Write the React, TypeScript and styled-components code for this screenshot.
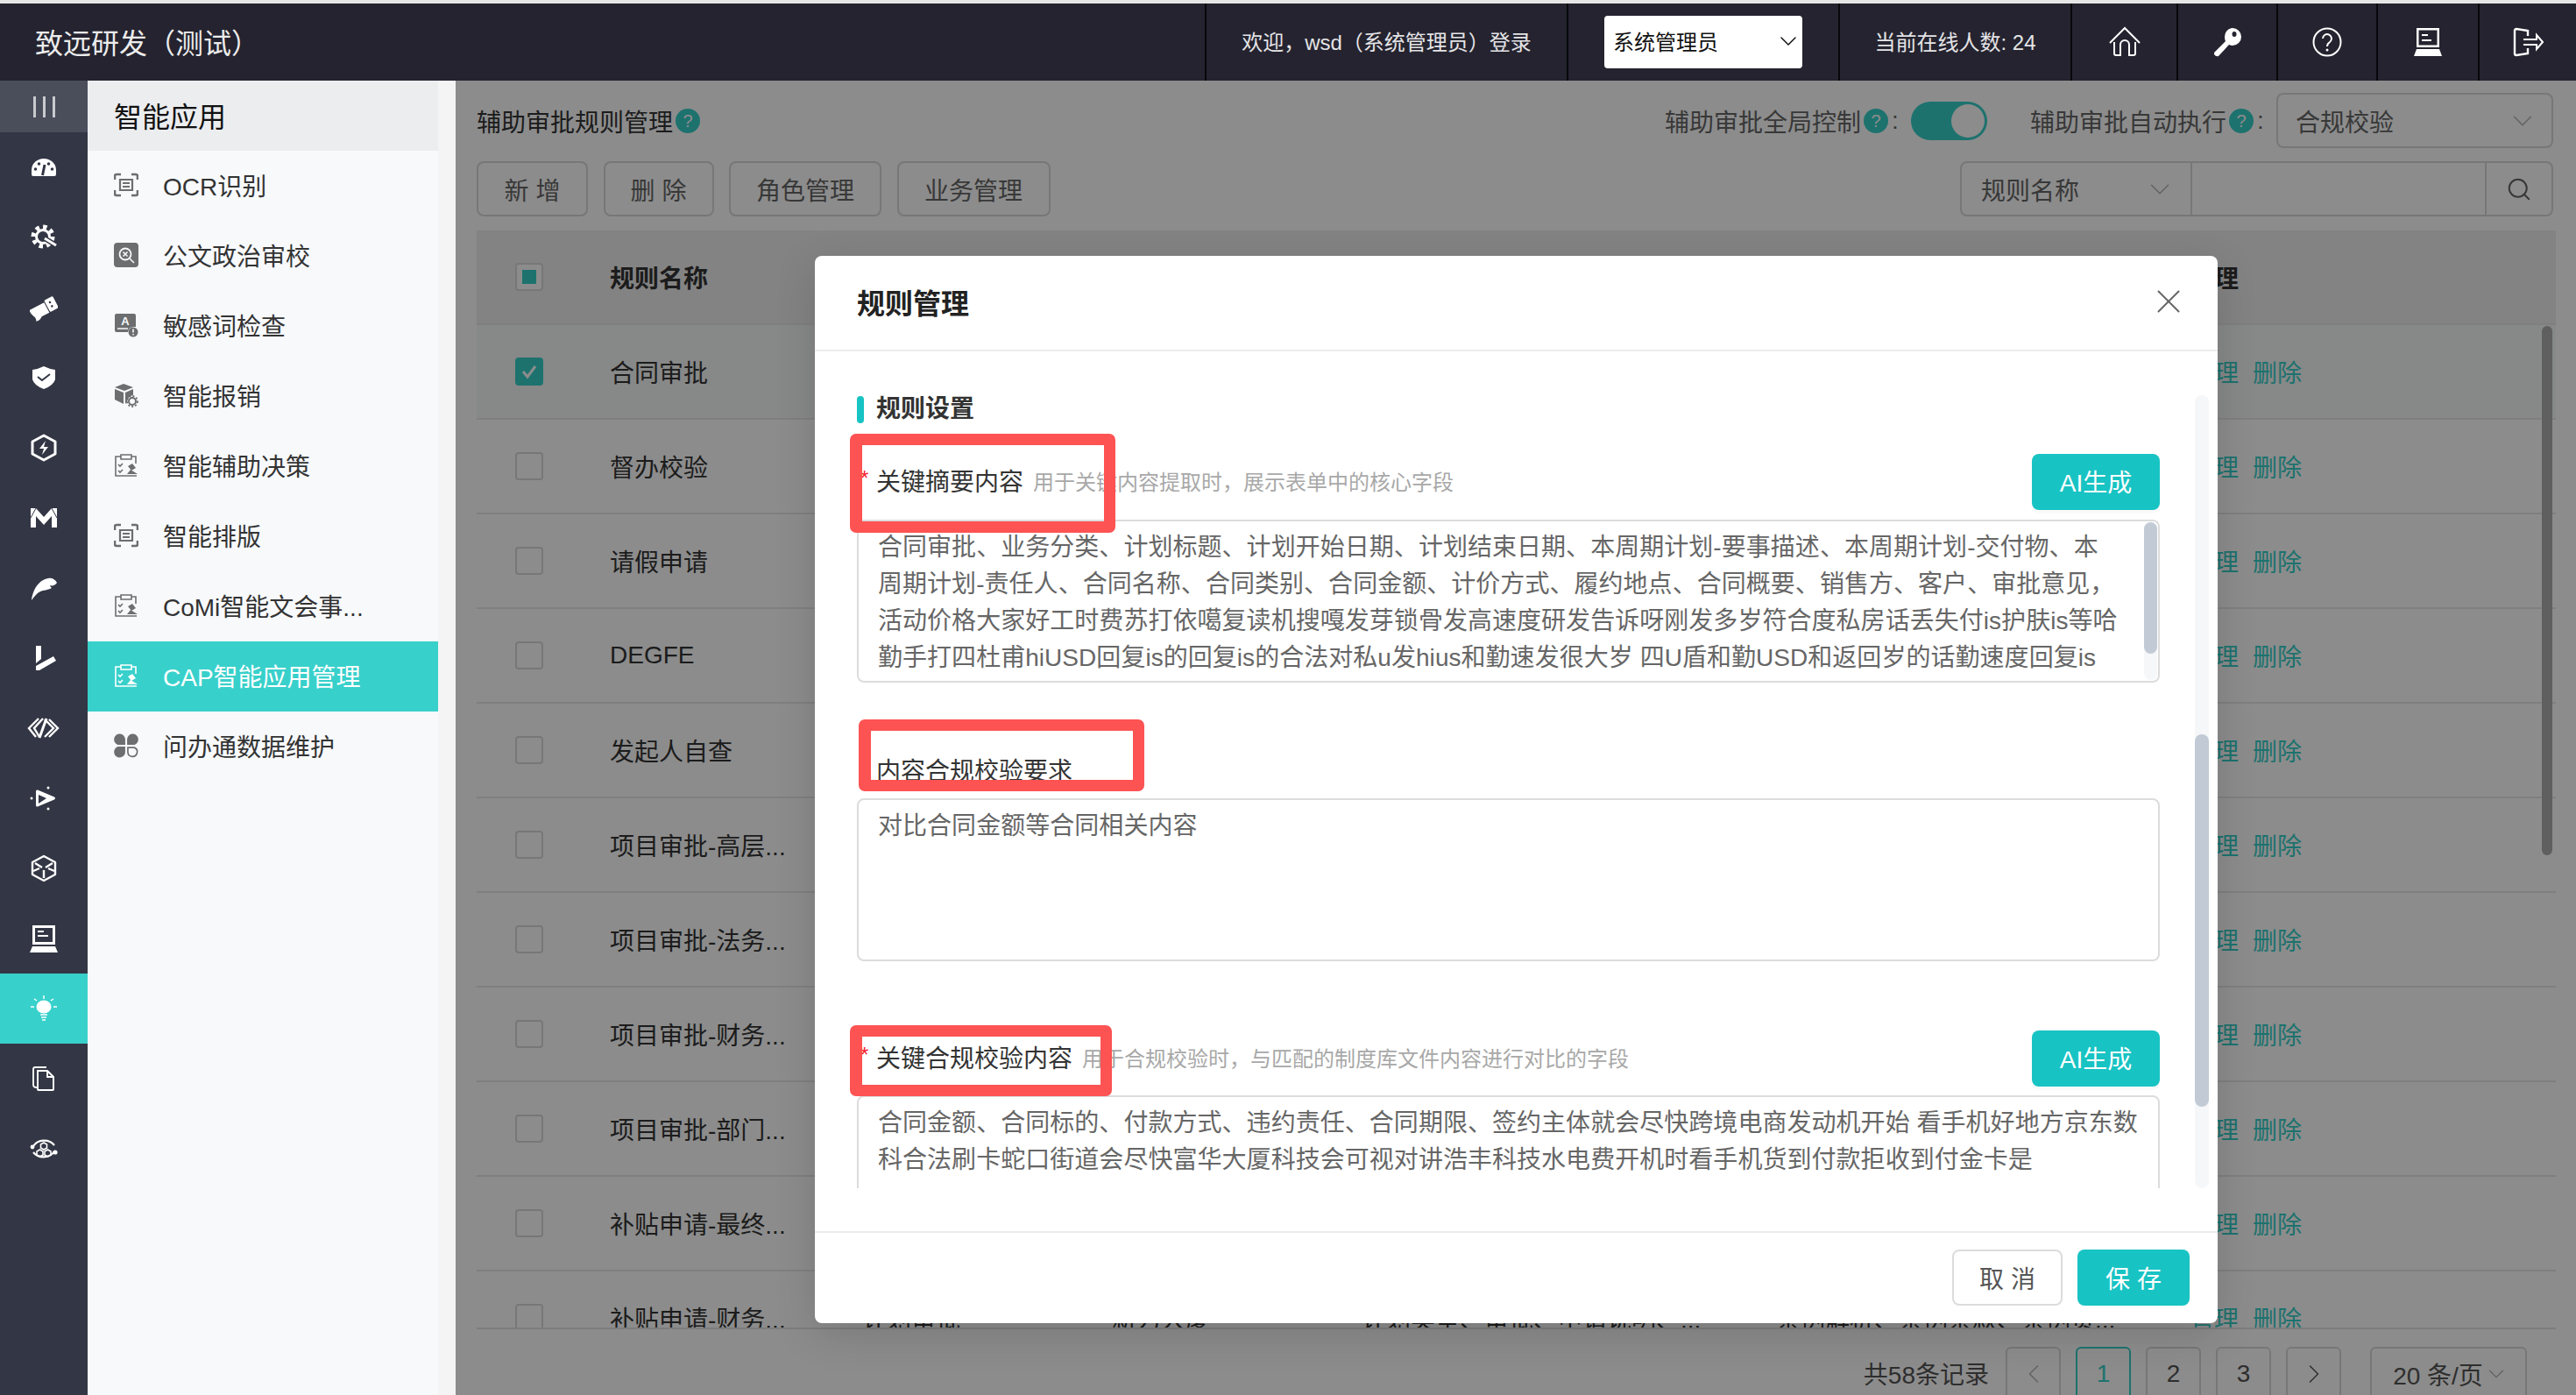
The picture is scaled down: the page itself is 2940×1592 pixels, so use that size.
import React from "react";
import styled, { createGlobalStyle } from "styled-components";
import { ChevronDown, ChevronLeft, ChevronRight, Search, X } from "lucide-react";

const RAIL_BG = "#333644";
const ACTIVE = "#38d0cb";
const PRIMARY = "#18c3c3";
const MAIN_TEAL = "#36cfc9";

const GlobalStyle = createGlobalStyle`
    html, body {
        margin: 0;
        padding: 0;
        width: 2940px;
        height: 1592px;
        overflow: hidden;
        background: #ffffff;
        font-family: "Liberation Sans", "Noto Sans CJK SC", sans-serif;
    }
    * {
        box-sizing: border-box;
    }
`

const Page = styled.div`
    width: 2940px;
    height: 1592px;
    display: flex;
    flex-direction: column;
    border-top: 4px solid #e6e6e6;
`

/* top bar */
const TopBar = styled.header`
    height: 88px;
    flex: none;
    display: flex;
    align-items: stretch;
    background: #24232f;
    color: #e4e4e6;
`
const Brand = styled.div`
    flex: 1;
    padding: 0 0 3px 40px;
    display: flex;
    align-items: center;
    font-size: 32px;
    color: #ececec;
`
const TopCell = styled.div<{ $w: number; $text?: boolean }>`
    width: ${(p) => p.$w}px;
    flex: none;
    display: flex;
    align-items: center;
    justify-content: center;
    border-left: 2px solid #08080c;
    padding-bottom: ${(p) => (p.$text ? "3px" : "0")};
    font-size: 24px;
    white-space: nowrap;
`
const RoleSelect = styled.div`
    width: 226px;
    height: 60px;
    background: #ffffff;
    border-radius: 4px;
    color: #111;
    display: flex;
    align-items: center;
    justify-content: space-between;
    padding: 0 0 3px 10px;
`

/* layout */
const Body = styled.div`
    flex: 1;
    display: flex;
    min-height: 0;
`
const Rail = styled.nav`
    width: 100px;
    flex: none;
    background: ${RAIL_BG};
    display: flex;
    flex-direction: column;
`
const RailToggle = styled.div`
    height: 59px;
    flex: none;
    background: #4a4e5b;
    display: flex;
    align-items: center;
    justify-content: center;
    gap: 8px;
    i {
        display: block;
        width: 3px;
        height: 24px;
        background: #c9cace;
    }
`
const RailItem = styled.div<{ $active?: boolean }>`
    height: 80px;
    flex: none;
    display: flex;
    align-items: center;
    justify-content: center;
    color: #ffffff;
    background: ${(p) => (p.$active ? ACTIVE : "transparent")};
`
const Menu = styled.aside`
    width: 420px;
    flex: none;
    background: #f7f9fb;
    border-right: 20px solid #f4f4f4;
`
const MenuHead = styled.div`
    height: 80px;
    background: #ecedef;
    padding: 0 0 3px 30px;
    display: flex;
    align-items: center;
    font-size: 32px;
    color: #111;
`
const MenuItem = styled.div<{ $active?: boolean }>`
    height: 80px;
    padding: 0 0 3px 30px;
    display: grid;
    grid-template-columns: 28px auto;
    justify-content: start;
    align-items: center;
    column-gap: 28px;
    font-size: 28px;
    white-space: nowrap;
    color: ${(p) => (p.$active ? "#ffffff" : "#333333")};
    background: ${(p) => (p.$active ? ACTIVE : "transparent")};
    svg {
        justify-self: center;
        color: ${(p) => (p.$active ? "#ffffff" : "#6c6e70")};
    }
`

/* main page, dimmed by the modal mask */
const Main = styled.main`
    flex: 1;
    min-width: 0;
    position: relative;
    overflow: hidden;
    background: #ffffff;
    padding: 14px 23px 0 24px;
`
const Mask = styled.div`
    position: absolute;
    inset: 0;
    background: rgba(0, 0, 0, 0.45);
`
const TitleRow = styled.div`
    height: 63px;
    display: flex;
    align-items: center;
    padding-right: 3px;
    font-size: 28px;
    color: #666666;
    white-space: nowrap;
`
const PageTitle = styled.div`
    display: flex;
    align-items: center;
    color: #333333;
    margin-right: auto;
`
const Badge = styled.span`
    width: 28px;
    height: 28px;
    margin-left: 3px;
    flex: none;
    border-radius: 50%;
    background: ${MAIN_TEAL};
    color: #ffffff;
    font-size: 20px;
    line-height: 28px;
    text-align: center;
`
const Colon = styled.span`
    width: 26px;
    padding-left: 4px;
`
const Toggle = styled.div`
    width: 87px;
    height: 44px;
    border-radius: 22px;
    background: ${MAIN_TEAL};
    display: flex;
    align-items: center;
    justify-content: flex-end;
    padding-right: 3px;
    margin-right: 49px;
    &::after {
        content: "";
        width: 38px;
        height: 38px;
        border-radius: 50%;
        background: #ffffff;
    }
`
const AutoSelect = styled.div`
    width: 316px;
    height: 63px;
    border: 2px solid #d9d9d9;
    border-radius: 8px;
    display: flex;
    align-items: center;
    justify-content: space-between;
    padding: 0 14px 0 20px;
    color: #666666;
    svg {
        color: #b5b5b5;
    }
`
const Toolbar = styled.div`
    height: 63px;
    margin-top: 15px;
    display: flex;
    padding-right: 3px;
    gap: 17.5px;
`
const ToolButton = styled.button<{ $w: number }>`
    width: ${(p) => p.$w}px;
    height: 63px;
    padding: 0;
    border: 2px solid #d9d9d9;
    border-radius: 8px;
    background: #ffffff;
    color: #666666;
    font: inherit;
    font-size: 28px;
    white-space: pre;
`
const SearchBox = styled.div`
    margin-left: auto;
    width: 677px;
    height: 63px;
    border: 2px solid #d9d9d9;
    border-radius: 8px;
    display: flex;
    font-size: 28px;
    color: #666666;
    svg {
        color: #b5b5b5;
    }
`
const SearchField = styled.div`
    width: 263px;
    display: flex;
    align-items: center;
    justify-content: space-between;
    padding: 0 16px 0 22px;
    border-right: 2px solid #d9d9d9;
`
const SearchInput = styled.div`
    flex: 1;
`
const SearchAction = styled.div`
    width: 76px;
    display: flex;
    align-items: center;
    justify-content: center;
    border-left: 2px solid #d9d9d9;
    svg {
        color: #666666;
    }
`

/* table */
const TableWrap = styled.div`
    position: relative;
    height: 1254px;
    margin-top: 16px;
    overflow: hidden;
    border-bottom: 2px solid #e4e4e4;
    font-size: 28px;
    color: #333333;
`
const TableRow = styled.div<{ $head?: boolean; $selected?: boolean }>`
    display: grid;
    grid-template-columns: 152px 288px 285px 285px 473px 472px 1fr;
    height: 108px;
    align-items: center;
    border-bottom: 2px solid #e8e8e8;
    white-space: nowrap;
    font-weight: ${(p) => (p.$head ? 700 : 400)};
    background: ${(p) => (p.$head ? "#eeeeee" : p.$selected ? "#f6f7f8" : "#ffffff")};
`
const CheckCell = styled.div`
    padding-left: 44px;
`
const CheckBox = styled.div<{ $state?: "checked" | "mixed" }>`
    width: 32px;
    height: 32px;
    border-radius: 4px;
    border: 2px solid ${(p) => (p.$state === "checked" ? MAIN_TEAL : "#d9d9d9")};
    background: ${(p) => (p.$state === "checked" ? MAIN_TEAL : "#ffffff")};
    display: flex;
    align-items: center;
    justify-content: center;
    &::after {
        content: "";
        display: ${(p) => (p.$state === "mixed" ? "block" : "none")};
        width: 16px;
        height: 16px;
        background: ${MAIN_TEAL};
    }
`
const ActionCell = styled.div`
    grid-column: 7;
    display: flex;
    gap: 16px;
    color: ${MAIN_TEAL};
`
const HeadAction = styled.div`
    grid-column: 7;
`
const PageScroll = styled.div`
    position: absolute;
    left: 2357px;
    top: 109px;
    width: 12px;
    height: 604px;
    border-radius: 6px;
    background: #adadad;
`

/* pagination */
const Pager = styled.div`
    height: 64px;
    margin-top: 20px;
    padding-right: 33px;
    display: flex;
    align-items: center;
    justify-content: flex-end;
    gap: 17px;
    font-size: 28px;
    color: #555555;
`
const PagerTotal = styled.span`
    margin: 0 2px 4px 0;
`
const PagerBox = styled.div<{ $active?: boolean; $wide?: boolean }>`
    width: ${(p) => (p.$wide ? "179px" : "63px")};
    height: 64px;
    padding: ${(p) => (p.$wide ? "0 0 3px 6px" : "0 0 3px")};
    border-radius: 6px;
    border: 2px solid ${(p) => (p.$active ? MAIN_TEAL : "#d9d9d9")};
    color: ${(p) => (p.$active ? MAIN_TEAL : "#555555")};
    background: #ffffff;
    display: flex;
    align-items: center;
    justify-content: center;
    white-space: nowrap;
    margin-left: ${(p) => (p.$wide ? "16px" : "0")};
    svg {
        flex: none;
    }
`

/* modal */
const Modal = styled.section`
    position: absolute;
    left: 410px;
    top: 200px;
    width: 1601px;
    height: 1218px;
    background: #ffffff;
    border-radius: 8px;
    box-shadow: 0 12px 48px rgba(0, 0, 0, 0.14);
    display: flex;
    flex-direction: column;
`
const ModalHeader = styled.div`
    height: 109px;
    flex: none;
    border-bottom: 2px solid #ececec;
    display: flex;
    align-items: center;
    justify-content: space-between;
    padding: 0 33px 3px 48px;
    font-size: 32px;
    font-weight: 700;
    color: #222222;
    svg {
        color: #666666;
    }
`
const ModalBody = styled.div`
    height: 955px;
    flex: none;
    overflow: hidden;
    padding: 51px 66px 0 48px;
    margin-bottom: 49px;
`
const SectionTitle = styled.div`
    height: 31px;
    display: flex;
    align-items: flex-start;
    gap: 14px;
    font-size: 28px;
    line-height: 30px;
    font-weight: 700;
    color: #333333;
    &::before {
        content: "";
        width: 8px;
        height: 31px;
        border-radius: 4px;
        background: ${PRIMARY};
    }
`
const FieldRow = styled.div<{ $plain?: boolean; $gap: number }>`
    position: relative;
    height: ${(p) => (p.$plain ? "40px" : "64px")};
    margin-top: ${(p) => p.$gap}px;
    padding-left: 22px;
    display: flex;
    align-items: center;
    white-space: nowrap;
`
const FieldLabel = styled.span`
    margin-bottom: 4px;
    font-size: 28px;
    color: #333333;
`
const Star = styled.span`
    position: absolute;
    left: 4px;
    top: 14px;
    font-size: 24px;
    color: #f5222d;
`
const FieldHint = styled.span`
    margin: 0 auto 4px 11px;
    font-size: 24px;
    color: #a8a8a8;
`
const GenerateButton = styled.button`
    width: 146px;
    height: 64px;
    padding: 0 0 3px;
    border: none;
    border-radius: 8px;
    background: ${PRIMARY};
    color: #ffffff;
    font: inherit;
    font-size: 28px;
    box-shadow: 0 4px 0 rgba(0, 0, 0, 0.02);
`
const TextBox = styled.div<{ $gap: number }>`
    position: relative;
    height: 186px;
    margin-top: ${(p) => p.$gap}px;
    border: 2px solid #dcdcdc;
    border-radius: 8px;
    overflow: hidden;
    padding: 9px 22px 0;
    font-size: 28px;
    line-height: 42px;
    letter-spacing: 0.04px;
    color: #666666;
    white-space: nowrap;
`
const BoxScrollTrack = styled.div`
    position: absolute;
    right: 1px;
    top: 1px;
    bottom: 1px;
    width: 15px;
    border-radius: 8px;
    background: #f6f7f9;
    &::after {
        content: "";
        display: block;
        height: 150px;
        border-radius: 8px;
        background: #c2cad5;
    }
`
const Annotation = styled.div<{ $left: number; $top: number; $w: number; $h: number }>`
    position: absolute;
    left: ${(p) => p.$left}px;
    top: ${(p) => p.$top}px;
    width: ${(p) => p.$w}px;
    height: ${(p) => p.$h}px;
    border: 13px solid #fd5353;
    border-left-width: 14px;
    border-radius: 7px;
    z-index: 2;
`
const BodyScroll = styled.div`
    position: absolute;
    left: 1575px;
    top: 159px;
    width: 16px;
    height: 905px;
    border-radius: 8px;
    background: #f6f7f9;
    &::after {
        content: "";
        display: block;
        height: 425px;
        border-radius: 8px;
        background: #c2cad5;
        transform: translateY(387px);
    }
`
const ModalFooter = styled.div`
    flex: 1;
    border-top: 2px solid #ececec;
    padding: 19px 32px 0 0;
    display: flex;
    justify-content: flex-end;
    gap: 17px;
`
const FooterButton = styled.button<{ $primary?: boolean }>`
    width: ${(p) => (p.$primary ? "128px" : "126px")};
    height: 64px;
    border-radius: 8px;
    border: ${(p) => (p.$primary ? "none" : "2px solid #dcdcdc")};
    background: ${(p) => (p.$primary ? PRIMARY : "#ffffff")};
    color: ${(p) => (p.$primary ? "#ffffff" : "#555555")};
    font: inherit;
    font-size: 28px;
    white-space: pre;
`

/* rail and top-bar drawings */
const Ico: React.FC<{ w?: number; h?: number; vb?: string; children: React.ReactNode }> = ({ w = 32, h = 32, vb = "0 0 32 32", children }) => (
    <svg width={w} height={h} viewBox={vb} fill="none">
        {children}
    </svg>
)

const railIcons: React.ReactNode[] = [
    <Ico key="gauge">
        <path d="M2 24V19a14 13 0 0 1 28 0v5q0 2-2 2H4q-2 0-2-2z" fill="#fff" />
        <circle cx="6.5" cy="18" r="1.8" fill={RAIL_BG} />
        <circle cx="10.5" cy="12" r="1.8" fill={RAIL_BG} />
        <circle cx="21.5" cy="12" r="1.8" fill={RAIL_BG} />
        <circle cx="25.5" cy="18" r="1.8" fill={RAIL_BG} />
        <path d="M14.5 25l2.500-12" stroke={RAIL_BG} strokeWidth="3" />
    </Ico>,
    <Ico key="gear">
        <circle cx="15" cy="15" r="11" stroke="#fff" strokeWidth="5" strokeDasharray="4.4 4.2" />
        <circle cx="15" cy="15" r="7.5" stroke="#fff" strokeWidth="3" />
        <path d="M17 17l13 8" stroke={RAIL_BG} strokeWidth="6" />
        <path d="M17 17l13 8" stroke="#fff" strokeWidth="3" />
    </Ico>,
    <Ico key="usb">
        <g transform="rotate(-28 16 16)">
            <path d="M0 11h19v13H9q-3 3-8 2 2-4 0-7-2-4-1-8z" fill="#fff" />
            <rect x="20" y="9" width="11" height="15" rx="1.500" fill="#fff" />
            <circle cx="25" cy="14" r="1.300" fill={RAIL_BG} />
            <circle cx="25" cy="19" r="1.300" fill={RAIL_BG} />
        </g>
    </Ico>,
    <Ico key="shield">
        <path d="M3 7q7-1 13-4 6 3 13 4v11q-2 7-13 11Q5 25 3 18z" fill="#fff" />
        <path d="M9 15l5 4 9-7" stroke={RAIL_BG} strokeWidth="2" />
    </Ico>,
    <Ico key="bolt">
        <path d="M16 2l13 7v14l-13 7-13-7V9z" stroke="#fff" strokeWidth="3" strokeLinejoin="round" />
        <path d="M18 8l-7 9h5l-2 7 7-9h-5z" fill="#fff" />
    </Ico>,
    <Ico key="m">
        <path d="M1 5h6l9 10 9-10h6v22h-6V14l-9 10-9-10v13H1z" fill="#fff" />
        <path d="M7 5l-6 11M25 5l6 11" stroke={RAIL_BG} strokeWidth="1" />
    </Ico>,
    <Ico key="feather">
        <path d="M2 30C3 20 9 7 21 5c4-1 8 1 10 5-2 3-5 4-8 3 1 2 1 2 2 3-5 3-9 2-13 4-4 2-7 6-10 10z" fill="#fff" />
    </Ico>,
    <Ico key="sign">
        <path d="M7 2h6v15l-6 5zM7 25L27 14l3 5L11 30H7z" fill="#fff" />
    </Ico>,
    <Ico key="code" w={40} vb="0 0 40 32">
        <path d="M14 5L3 16l8 10M19 5L9 16l6 10" stroke="#fff" strokeWidth="2.400" />
        <path d="M26 6l10 10-10 10M21 6l10 10-10 10" stroke="#fff" strokeWidth="2.400" />
        <path d="M23 5L15 27" stroke="#fff" strokeWidth="3" />
    </Ico>,
    <Ico key="play">
        <path d="M7 8q0-2 2-1.500l19 8q2 1.500 0 3l-19 8q-2 .5-2-1.500z" fill="#fff" />
        <path d="M10 12l9 4-9 6z" fill={RAIL_BG} />
        <circle cx="2" cy="16" r="1.500" fill="#fff" />
        <circle cx="21" cy="4" r="1.500" fill="#fff" />
        <circle cx="21" cy="28" r="1.500" fill="#fff" />
    </Ico>,
    <Ico key="cube">
        <path d="M16 2l13 7v14l-13 7-13-7V9z" stroke="#fff" strokeWidth="2.400" strokeLinejoin="round" />
        <path d="M16 18v9M14 15L6 10M18 15l8-5M4 19l7-3M28 19l-7-3" stroke="#fff" strokeWidth="2.400" />
    </Ico>,
    <Ico key="laptop" w={36} h={34} vb="0 0 36 34">
        <path d="M5 2h26v22H5zM8 5v16h20V5z" fill="#fff" fillRule="evenodd" />
        <path d="M11 8h7v2h-7zM11 13h12v2H11z" fill="#fff" />
        <path d="M5 26h26l3 7H2z" fill="#fff" />
    </Ico>,
    <Ico key="bulb">
        <ellipse cx="16" cy="14" rx="8.500" ry="7.500" fill="#fff" />
        <path d="M12 23h8M13 26h6M14 29h4M16 1v4M5 5l3 2M27 5l-3 2M1 14h4M27 14h4" stroke="#fff" strokeWidth="1.500" />
    </Ico>,
    <Ico key="files">
        <path d="M8 26q-4 0-4-3V5q0-2 2-2h13" stroke="#fff" strokeWidth="1.800" />
        <path d="M9 7h11l7 7v14q0 1-1 1H10q-1 0-1-1z" stroke="#fff" strokeWidth="2" />
        <path d="M20 7v7h7" stroke="#fff" strokeWidth="1.800" />
    </Ico>,
    <Ico key="cycle">
        <path d="M4 13A14 12 0 0 1 28 12M28 19A14 12 0 0 1 4 20" stroke="#fff" strokeWidth="2.200" />
        <circle cx="3" cy="14" r="2.400" fill="#fff" />
        <circle cx="29" cy="20" r="2.600" fill="#fff" />
        <path d="M16 9l3.500 2v4L16 17l-3.500-2v-4zM11.500 17l3.500 2v4l-3.500 2L8 23v-4zM20.500 17l3.500 2v4l-3.500 2-3.500-2v-4z" stroke="#fff" strokeWidth="1.600" />
    </Ico>,
];

const HomeIcon = () => (
    <Ico w={36} h={36} vb="0 0 36 36">
        <path d="M1 19L18 2l17 17" stroke="#fff" strokeWidth="2" />
        <path d="M6 18v13q0 2 2 2h5V21a5 5 0 0 1 10 0v12h5q2 0 2-2V18" stroke="#fff" strokeWidth="2" />
    </Ico>
);
const KeyIcon = () => (
    <Ico w={36} h={36} vb="0 0 36 36">
        <path d="M24 2a10 10 0 0 1 0 20q-2 0-4-1L8 34q-3 1-5-2v-2l13-13q-1-2-1-5a10 10 0 0 1 8-10z" fill="#fff" />
        <ellipse cx="26" cy="9" rx="2.500" ry="3" fill="#24232f" />
    </Ico>
);
const HelpIcon = () => (
    <Ico w={36} h={36} vb="0 0 36 36">
        <circle cx="18" cy="18" r="15.500" stroke="#fff" strokeWidth="2" />
        <path d="M13 14a5 5 0 1 1 8 4q-3 2-3 5" stroke="#fff" strokeWidth="2" />
        <circle cx="18" cy="27" r="1.500" fill="#fff" />
    </Ico>
);
const LaptopIcon = () => (
    <Ico w={36} h={36} vb="0 0 36 36">
        <path d="M5 2h26v22H5zM7.500 4.500v17h21v-17z" fill="#fff" fillRule="evenodd" />
        <path d="M11 9h7v2h-7zM11 15h11v2H11z" fill="#fff" />
        <path d="M5 26h26l3 8H2z" fill="#fff" />
    </Ico>
);
const ExitIcon = () => (
    <Ico w={36} h={36} vb="0 0 36 36">
        <path d="M18 11V5L5 3q-2 0-2 2v26q0 2 2 2l13-2v-6" stroke="#fff" strokeWidth="2.400" />
        <path d="M13 15h15v-5l7 8-7 8v-5H13" stroke="#fff" strokeWidth="2" />
    </Ico>
);

/* menu drawings */
const ScanIcon = () => (
    <Ico w={28} h={28} vb="0 0 28 28">
        <path d="M8 2H3Q1 2 1 4v4M20 2h5q2 0 2 2v4M8 26H3q-2 0-2-2v-4M20 26h5q2 0 2-2v-4" stroke="currentColor" strokeWidth="2.600" />
        <path d="M7 8h14v12H7z" stroke="currentColor" strokeWidth="2.200" />
        <path d="M10 12h8M10 16h8" stroke="currentColor" strokeWidth="2" />
    </Ico>
);
const LensIcon = () => (
    <Ico w={28} h={28} vb="0 0 28 28">
        <rect y="0" width="28" height="28" rx="4" fill="currentColor" />
        <circle cx="13" cy="13" r="6.500" stroke="#f7f9fb" strokeWidth="1.800" />
        <path d="M18 18l5 5M10.500 10.500l5 5M15.500 10.500l-5 5" stroke="#f7f9fb" strokeWidth="1.600" />
    </Ico>
);
const WordIcon = () => (
    <Ico w={28} h={28} vb="0 0 28 28">
        <path d="M1 3q0-2 2-2h20q2 0 2 2v13h-3a7 7 0 0 0-6 6H3q-2 0-2-2z" fill="currentColor" />
        <text x="13" y="14" textAnchor="middle" fontSize="13" fontWeight="700" fill="#f7f9fb" fontFamily="Liberation Sans">A</text>
        <path d="M4 18h12" stroke="#f7f9fb" strokeWidth="1.500" />
        <circle cx="22" cy="22" r="5.500" fill="currentColor" />
        <path d="M22 18.500v4M22 24v1.500" stroke="#f7f9fb" strokeWidth="1.600" />
    </Ico>
);
const CubeGearIcon = () => (
    <Ico w={28} h={28} vb="0 0 28 28">
        <path d="M11 1l11 4-10 4L1 5zM1 7l10 4v13L1 19zM13 11l9-4v7a8 8 0 0 0-7 8l-2 2z" fill="currentColor" />
        <circle cx="21" cy="21" r="4" stroke="currentColor" strokeWidth="2" />
        <circle cx="21" cy="21" r="6" stroke="currentColor" strokeWidth="1.800" strokeDasharray="2 2" />
    </Ico>
);
const ClipIcon = () => (
    <Ico w={28} h={28} vb="0 0 28 28">
        <path d="M8 4H2v22h24M20 4h5v8" stroke="currentColor" strokeWidth="1.600" />
        <path d="M8 2h12v5H8z" stroke="currentColor" strokeWidth="1.600" />
        <path d="M5 13l2 2 3-3M5 20l2 2 3-3" stroke="currentColor" strokeWidth="1.600" />
        <path d="M16 15l5-3 4 5-5 3zM19 19l-4 5h12" fill="currentColor" />
    </Ico>
);
const CloverIcon = () => (
    <Ico w={32} h={30} vb="0 0 30 28">
        <path d="M14 13H6a6 6 0 1 1 8-6zM16 13h8a6 6 0 1 0-8-6zM14 15H6a6 6 0 1 0 8 6z" fill="currentColor" />
        <path d="M16.800 16h7a5 5 0 1 1-7 5z" stroke="currentColor" strokeWidth="1.600" />
    </Ico>
);
const CheckMark = () => (
    <svg width="20" height="18" viewBox="0 0 20 18" fill="none">
        <path d="M3 9l5 6 9-12" stroke="#fff" strokeWidth="3" />
    </svg>
);

const menuItems: { label: string; icon: React.ReactNode; active?: boolean }[] = [
    { label: "OCR识别", icon: <ScanIcon /> },
    { label: "公文政治审校", icon: <LensIcon /> },
    { label: "敏感词检查", icon: <WordIcon /> },
    { label: "智能报销", icon: <CubeGearIcon /> },
    { label: "智能辅助决策", icon: <ClipIcon /> },
    { label: "智能排版", icon: <ScanIcon /> },
    { label: "CoMi智能文会事...", icon: <ClipIcon /> },
    { label: "CAP智能应用管理", icon: <ClipIcon />, active: true },
    { label: "问办通数据维护", icon: <CloverIcon /> },
];

const ruleNames = [
    "合同审批",
    "督办校验",
    "请假申请",
    "DEGFE",
    "发起人自查",
    "项目审批-高层...",
    "项目审批-法务...",
    "项目审批-财务...",
    "项目审批-部门...",
    "补贴申请-最终...",
    "补贴申请-财务...",
];

// only the last row shows below the modal, the rest of these columns stay covered
const lastRowCells = ["计划审批", "新力大厦", "计划类型、审批、申请说明、...", "条例解析、条例条款、条例责..."];

const summaryLines = [
    "合同审批、业务分类、计划标题、计划开始日期、计划结束日期、本周期计划-要事描述、本周期计划-交付物、本",
    "周期计划-责任人、合同名称、合同类别、合同金额、计价方式、履约地点、合同概要、销售方、客户、审批意见，",
    "活动价格大家好工时费苏打依噶复读机搜嘎发芽锁骨发高速度研发告诉呀刚发多岁符合度私房话丢失付is护肤is等哈",
    "勤手打四杜甫hiUSD回复is的回复is的合法对私u发hius和勤速发很大岁 四U盾和勤USD和返回岁的话勤速度回复is",
    "的合法对私发货速度很快大家好工时费苏打依噶复读机搜嘎发芽",
];

const complianceLines = [
    "合同金额、合同标的、付款方式、违约责任、合同期限、签约主体就会尽快跨境电商发动机开始 看手机好地方京东数",
    "科合法刷卡蛇口街道会尽快富华大厦科技会可视对讲浩丰科技水电费开机时看手机货到付款拒收到付金卡是",
];

const App: React.FC = () => {
    return (
        <Page>
            <GlobalStyle />
            <TopBar>
                <Brand>致远研发（测试）</Brand>
                <TopCell $w={413} $text>欢迎，wsd（系统管理员）登录</TopCell>
                <TopCell $w={310}>
                    <RoleSelect>
                        系统管理员
                        <ChevronDown size={32} strokeWidth={1.1} />
                    </RoleSelect>
                </TopCell>
                <TopCell $w={265} $text>当前在线人数: 24</TopCell>
                <TopCell $w={121}><HomeIcon /></TopCell>
                <TopCell $w={114}><KeyIcon /></TopCell>
                <TopCell $w={114}><HelpIcon /></TopCell>
                <TopCell $w={116}><LaptopIcon /></TopCell>
                <TopCell $w={112}><ExitIcon /></TopCell>
            </TopBar>

            <Body>
                <Rail>
                    <RailToggle><i /><i /><i /></RailToggle>
                    {railIcons.map((icon, i) => (
                        <RailItem key={i} $active={i === 12}>{icon}</RailItem>
                    ))}
                </Rail>

                <Menu>
                    <MenuHead>智能应用</MenuHead>
                    {menuItems.map((item) => (
                        <MenuItem key={item.label} $active={item.active}>
                            {item.icon}
                            {item.label}
                        </MenuItem>
                    ))}
                </Menu>

                <Main>
                    <TitleRow>
                        <PageTitle>辅助审批规则管理<Badge>?</Badge></PageTitle>
                        辅助审批全局控制<Badge>?</Badge><Colon>:</Colon>
                        <Toggle />
                        辅助审批自动执行<Badge>?</Badge><Colon>:</Colon>
                        <AutoSelect>
                            合规校验
                            <ChevronDown size={38} strokeWidth={1} />
                        </AutoSelect>
                    </TitleRow>

                    <Toolbar>
                        <ToolButton $w={127}>新 增</ToolButton>
                        <ToolButton $w={126}>删 除</ToolButton>
                        <ToolButton $w={174}>角色管理</ToolButton>
                        <ToolButton $w={175}>业务管理</ToolButton>
                        <SearchBox>
                            <SearchField>
                                规则名称
                                <ChevronDown size={38} strokeWidth={1} />
                            </SearchField>
                            <SearchInput />
                            <SearchAction><Search size={30} strokeWidth={1.6} /></SearchAction>
                        </SearchBox>
                    </Toolbar>

                    <TableWrap>
                        <TableRow $head>
                            <CheckCell><CheckBox $state="mixed" /></CheckCell>
                            <div>规则名称</div>
                            <HeadAction>管理</HeadAction>
                        </TableRow>
                        {ruleNames.map((name, i) => (
                            <TableRow key={name} $selected={i === 0}>
                                <CheckCell>
                                    <CheckBox $state={i === 0 ? "checked" : undefined}>
                                        {i === 0 && <CheckMark />}
                                    </CheckBox>
                                </CheckCell>
                                <div>{name}</div>
                                {i === ruleNames.length - 1 && lastRowCells.map((cell) => <div key={cell}>{cell}</div>)}
                                <ActionCell>
                                    <span>管理</span>
                                    <span>删除</span>
                                </ActionCell>
                            </TableRow>
                        ))}
                        <PageScroll />
                    </TableWrap>

                    <Pager>
                        <PagerTotal>共58条记录</PagerTotal>
                        <PagerBox><ChevronLeft size={36} strokeWidth={1} color="#b5b5b5" /></PagerBox>
                        <PagerBox $active>1</PagerBox>
                        <PagerBox>2</PagerBox>
                        <PagerBox>3</PagerBox>
                        <PagerBox><ChevronRight size={36} strokeWidth={1} /></PagerBox>
                        <PagerBox $wide>
                            20 条/页
                            <ChevronDown size={30} strokeWidth={1} color="#b5b5b5" />
                        </PagerBox>
                    </Pager>

                    <Mask />

                    <Modal>
                        <ModalHeader>
                            规则管理
                            <X size={46} strokeWidth={1} />
                        </ModalHeader>
                        <ModalBody>
                            <SectionTitle>规则设置</SectionTitle>

                            <FieldRow $gap={35}>
                                <Star>*</Star>
                                <FieldLabel>关键摘要内容</FieldLabel>
                                <FieldHint>用于关键内容提取时，展示表单中的核心字段</FieldHint>
                                <GenerateButton>AI生成</GenerateButton>
                                <Annotation $left={-8} $top={-23} $w={303} $h={113} />
                            </FieldRow>
                            <TextBox $gap={11}>
                                {summaryLines.map((line) => <div key={line}>{line}</div>)}
                                <BoxScrollTrack />
                            </TextBox>

                            <FieldRow $plain $gap={81}>
                                <FieldLabel>内容合规校验要求</FieldLabel>
                                <Annotation $left={2} $top={-39} $w={326} $h={82} />
                            </FieldRow>
                            <TextBox $gap={11}>对比合同金额等合同相关内容</TextBox>

                            <FieldRow $gap={79}>
                                <Star>*</Star>
                                <FieldLabel>关键合规校验内容</FieldLabel>
                                <FieldHint>用于合规校验时，与匹配的制度库文件内容进行对比的字段</FieldHint>
                                <GenerateButton>AI生成</GenerateButton>
                                <Annotation $left={-8} $top={-6} $w={299} $h={81} />
                            </FieldRow>
                            <TextBox $gap={10}>
                                {complianceLines.map((line) => <div key={line}>{line}</div>)}
                            </TextBox>
                        </ModalBody>
                        <BodyScroll />
                        <ModalFooter>
                            <FooterButton>取 消</FooterButton>
                            <FooterButton $primary>保 存</FooterButton>
                        </ModalFooter>
                    </Modal>
                </Main>
            </Body>
        </Page>
    )
}

export default App;
